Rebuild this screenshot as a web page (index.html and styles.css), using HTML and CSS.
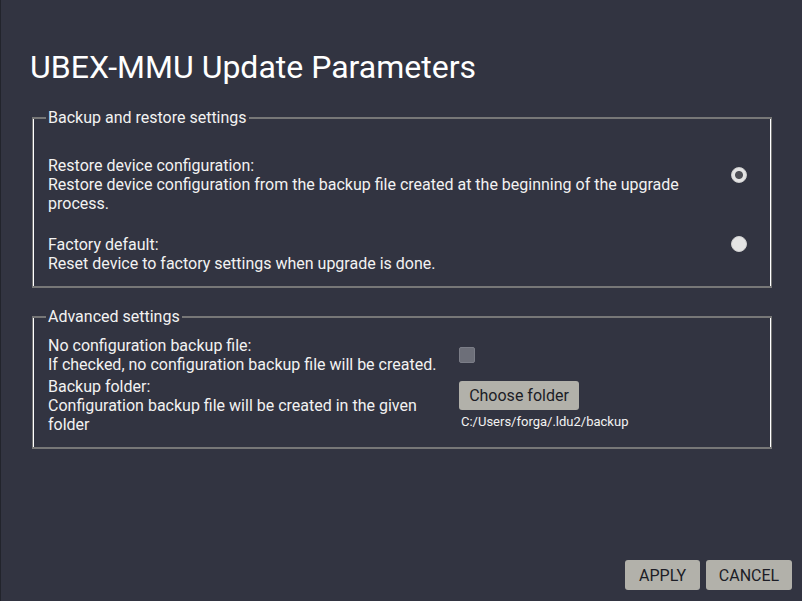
FILE: index.html
```html
<!DOCTYPE html>
<html>
<head>
<meta charset="utf-8">
<link rel="stylesheet" href="styles.css">
</head>
<body>
<div class="dialog">
  <h1 class="title">UBEX-MMU Update Parameters</h1>

  <fieldset class="group group-backup">
    <legend class="group-legend">Backup and restore settings</legend>
    <div class="option option-restore">
      <div class="option-text">
        <div>Restore device configuration:</div>
        <div>Restore device configuration from the backup file created at the beginning of the upgrade process.</div>
      </div>
      <span class="radio radio-checked radio-first"></span>
    </div>
    <div class="option option-factory">
      <div class="option-text">
        <div>Factory default:</div>
        <div>Reset device to factory settings when upgrade is done.</div>
      </div>
      <span class="radio radio-second"></span>
    </div>
  </fieldset>

  <fieldset class="group group-advanced">
    <legend class="group-legend">Advanced settings</legend>
    <div class="adv-grid">
      <div class="adv-text">
        <div>No configuration backup file:</div>
        <div>If checked, no configuration backup file will be created.</div>
      </div>
      <div class="adv-control adv-check">
        <span class="checkbox"></span>
      </div>
      <div class="adv-text adv-text-narrow">
        <div>Backup folder:</div>
        <div>Configuration backup file will be created in the given folder</div>
      </div>
      <div class="adv-control adv-folder">
        <button class="btn btn-folder">Choose folder</button>
        <div class="path">C:/Users/forga/.ldu2/backup</div>
      </div>
    </div>
  </fieldset>

  <div class="spacer"></div>

  <div class="actions">
    <button class="btn btn-action btn-apply">APPLY</button>
    <button class="btn btn-action btn-cancel">CANCEL</button>
  </div>
</div>
</body>
</html>
```

FILE: styles.css
```css
html, body {
  margin: 0;
  padding: 0;
  background: #323441;
}

body {
  font-family: Roboto, "Liberation Sans", sans-serif;
  color: #f2f2f2;
  font-size: 16px;
  line-height: 19px;
}

.dialog {
  width: 802px;
  height: 601px;
  box-sizing: border-box;
  display: flex;
  flex-direction: column;
  padding: 0 10px 11px 31px;
  border-left: 1px solid #22242c;
}

.title {
  margin: 48px 0 0 -2px;
  font-weight: 400;
  font-size: 32px;
  line-height: 38px;
  color: #ffffff;
}

.group {
  margin: 0;
  width: 740px;
  box-sizing: border-box;
  border-style: solid;
  border-color: #777777;
  border-width: 2px 1px;
  box-shadow: inset 1px 0 #ffffff, inset -1px 0 #ffffff;
  padding: 0 15px 0 15px;
  min-width: 0;
}

.group-legend {
  padding: 0 2px;
  margin-left: -2px;
  line-height: 19px;
  color: #f2f2f2;
}

.group-backup {
  margin-top: 22px;
  padding-top: 29px;
  padding-bottom: 13px;
}

.option {
  display: flex;
  align-items: flex-start;
}

.option-text {
  width: 683px;
}

.option-factory {
  margin-top: 22px;
}

.radio {
  width: 16px;
  height: 16px;
  border-radius: 50%;
  background: #e4e4e4;
  box-sizing: border-box;
  border: 1px solid #cfcfcf;
  flex: none;
  margin-left: 0;
}

.radio-checked {
  background: radial-gradient(circle, #4f5057 0 3.5px, #e4e4e4 4.5px);
}

.radio-first {
  margin-top: 11px;
}

.radio-second {
  margin-top: 1px;
}

.group-advanced {
  margin-top: 19px;
  padding-top: 10px;
  padding-bottom: 13px;
}

.adv-grid {
  display: grid;
  grid-template-columns: 411px auto;
  row-gap: 3px;
}

.adv-text-narrow {
  max-width: 380px;
}

.adv-check {
  display: flex;
  align-items: center;
}

.checkbox {
  display: block;
  width: 16px;
  height: 16px;
  box-sizing: border-box;
  border-radius: 2px;
  background: #6d6f79;
  border: 1px solid #7b7d87;
}

.adv-folder {
  padding-top: 4px;
}

.btn {
  font-family: Roboto, "Liberation Sans", sans-serif;
  background: #b2b1aa;
  color: #1c1d26;
  border: none;
  border-radius: 3px;
  font-size: 16px;
  padding: 0;
}

.btn-folder {
  width: 120px;
  height: 29px;
  display: block;
}

.path {
  font-size: 13px;
  line-height: 15px;
  margin: 4px 0 0 2px;
  color: #f2f2f2;
}

.spacer {
  flex: 1;
}

.actions {
  display: flex;
  justify-content: flex-end;
  gap: 6px;
}

.btn-action {
  height: 30px;
}

.btn-apply {
  width: 75px;
}

.btn-cancel {
  width: 86px;
}
```
